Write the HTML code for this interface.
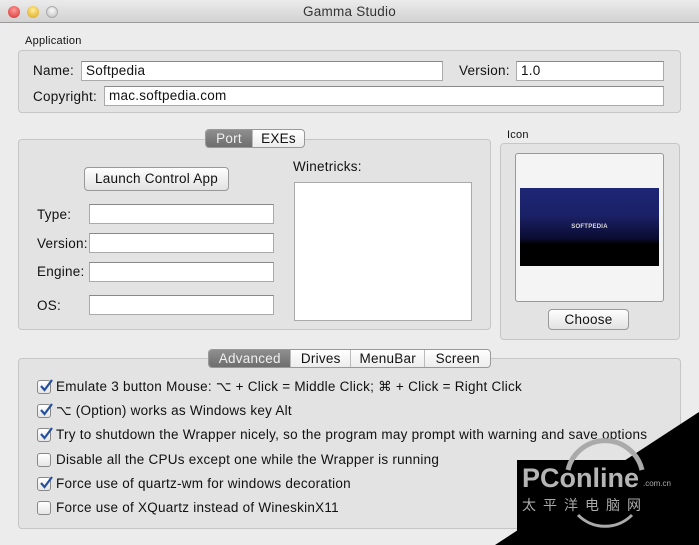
<!DOCTYPE html>
<html><head><style>
*{margin:0;padding:0;box-sizing:border-box}
body{width:699px;height:545px;background:#ececec;font-family:"Liberation Sans",sans-serif;font-size:13.5px;letter-spacing:0.25px;color:#111;position:relative;overflow:hidden}
.a{position:absolute;white-space:nowrap}
.tb{left:0;top:0;width:699px;height:23px;background:linear-gradient(#ebebeb,#d2d2d2);border-bottom:1px solid #9a9a9a;text-align:center;line-height:23px;color:#333}
.dot{width:12px;height:12px;border-radius:50%;top:6px}
.grp{border:1px solid #c6c6c6;background:#e3e3e3;border-radius:4px}
.f{background:#fff;border:1px solid #aaa;border-top-color:#888;padding-left:4px;line-height:18px}
.tabs{display:flex;height:19px;border:1px solid #999;border-radius:4px;background:linear-gradient(#fff,#ececec);overflow:hidden}
.tabs div{border-right:1px solid #bbb;text-align:center;line-height:17px}
.tabs .on{background:linear-gradient(#8e8e8e,#6e6e6e);color:#f0f0f0}
.btn{border:1px solid #999;border-radius:4px;background:linear-gradient(#fefefe,#e2e2e2);text-align:center;line-height:20px}
.cb{left:37px;width:14px;height:14px;border:1px solid #888;border-radius:3px;background:linear-gradient(#fff,#e6e6e6)}
.cb svg{position:absolute;left:0;top:-3px}
.t{left:56px}
</style></head><body>
<div class="a tb">Gamma Studio</div>
<div class="a dot" style="left:8px;background:radial-gradient(circle at 50% 35%,#f99,#d2302a)"></div>
<div class="a dot" style="left:27px;background:radial-gradient(circle at 50% 35%,#fe9,#dca10f)"></div>
<div class="a dot" style="left:46px;background:radial-gradient(circle at 50% 35%,#fafafa,#bcbcbc);border:1px solid #aaa"></div>

<div class="a" style="left:25px;top:35px;font-size:11px">Application</div>
<div class="a grp" style="left:18px;top:50px;width:663px;height:63px"></div>
<div class="a" style="left:33px;top:63px">Name:</div>
<div class="a f" style="left:81px;top:61px;width:362px;height:20px">Softpedia</div>
<div class="a" style="left:459px;top:63px">Version:</div>
<div class="a f" style="left:516px;top:61px;width:148px;height:20px">1.0</div>
<div class="a" style="left:33px;top:89px">Copyright:</div>
<div class="a f" style="left:104px;top:86px;width:560px;height:20px">mac.softpedia.com</div>

<div class="a grp" style="left:18px;top:139px;width:473px;height:191px"></div>
<div class="a tabs" style="left:205px;top:129px;width:100px"><div class="on" style="width:48px">Port</div><div style="width:52px;border:0">EXEs</div></div>
<div class="a btn" style="left:84px;top:167px;width:145px;height:24px;line-height:22px">Launch Control App</div>
<div class="a" style="left:37px;top:207px">Type:</div>
<div class="a f" style="left:89px;top:204px;width:185px;height:20px"></div>
<div class="a" style="left:37px;top:236px">Version:</div>
<div class="a f" style="left:89px;top:233px;width:185px;height:20px"></div>
<div class="a" style="left:37px;top:264px">Engine:</div>
<div class="a f" style="left:89px;top:262px;width:185px;height:20px"></div>
<div class="a" style="left:37px;top:298px">OS:</div>
<div class="a f" style="left:89px;top:295px;width:185px;height:20px"></div>
<div class="a" style="left:293px;top:159px">Winetricks:</div>
<div class="a f" style="left:294px;top:182px;width:178px;height:139px;border-color:#aaa"></div>

<div class="a" style="left:507px;top:129px;font-size:11px">Icon</div>
<div class="a grp" style="left:500px;top:143px;width:180px;height:197px"></div>
<div class="a" style="left:515px;top:153px;width:149px;height:149px;background:#f4f4f4;border:1px solid #999;border-radius:3px"></div>
<div class="a" style="left:520px;top:188px;width:139px;height:78px;background:linear-gradient(#1e2676 0%,#1b2166 35%,#0a0c30 65%,#000 72%,#000);color:#ddd;font-size:6px;font-weight:bold;text-align:center;line-height:78px">SOFTPEDIA</div>
<div class="a btn" style="left:548px;top:309px;width:81px;height:21px">Choose</div>

<div class="a grp" style="left:18px;top:358px;width:663px;height:171px"></div>
<div class="a tabs" style="left:208px;top:349px;width:283px"><div class="on" style="width:83px">Advanced</div><div style="width:60px">Drives</div><div style="width:75px">MenuBar</div><div style="width:65px;border:0">Screen</div></div>

<div class="a cb" style="top:380px"><svg width="16" height="16"><path d="M3 8l3.5 4L14 2" stroke="#264f9c" stroke-width="2.2" fill="none"/></svg></div>
<div class="a t" style="top:379px">Emulate 3 button Mouse: ⌥ + Click = Middle Click; ⌘ + Click = Right Click</div>
<div class="a cb" style="top:404px"><svg width="16" height="16"><path d="M3 8l3.5 4L14 2" stroke="#264f9c" stroke-width="2.2" fill="none"/></svg></div>
<div class="a t" style="top:403px">⌥ (Option) works as Windows key Alt</div>
<div class="a cb" style="top:428px"><svg width="16" height="16"><path d="M3 8l3.5 4L14 2" stroke="#264f9c" stroke-width="2.2" fill="none"/></svg></div>
<div class="a t" style="top:427px">Try to shutdown the Wrapper nicely, so the program may prompt with warning and save options</div>
<div class="a cb" style="top:453px"></div>
<div class="a t" style="top:452px">Disable all the CPUs except one while the Wrapper is running</div>
<div class="a cb" style="top:477px"><svg width="16" height="16"><path d="M3 8l3.5 4L14 2" stroke="#264f9c" stroke-width="2.2" fill="none"/></svg></div>
<div class="a t" style="top:476px">Force use of quartz-wm for windows decoration</div>
<div class="a cb" style="top:501px"></div>
<div class="a t" style="top:500px">Force use of XQuartz instead of WineskinX11</div>

<svg class="a" style="left:0;top:0" width="699" height="545">
<polygon points="699,412 495,545 699,545" fill="#000"/>
<rect x="517" y="460" width="182" height="85" fill="#000"/>
<path d="M568 470 A38 38 0 0 1 642 470" stroke="#aaa" stroke-width="5" fill="none"/>
<path d="M578 515 A38 38 0 0 0 632 515" stroke="#aaa" stroke-width="3" fill="none"/>
<text x="522" y="487" font-family="Liberation Sans" font-weight="bold" font-size="27" fill="#b5b5b5" letter-spacing="0">PConline</text>
<text x="643" y="486" font-family="Liberation Sans" font-size="8" fill="#aaa" letter-spacing="0">.com.cn</text>
<text x="522" y="510" font-family="Noto Sans CJK SC" font-size="14" fill="#aaa" letter-spacing="7">太平洋电脑网</text>
</svg>
</body></html>
